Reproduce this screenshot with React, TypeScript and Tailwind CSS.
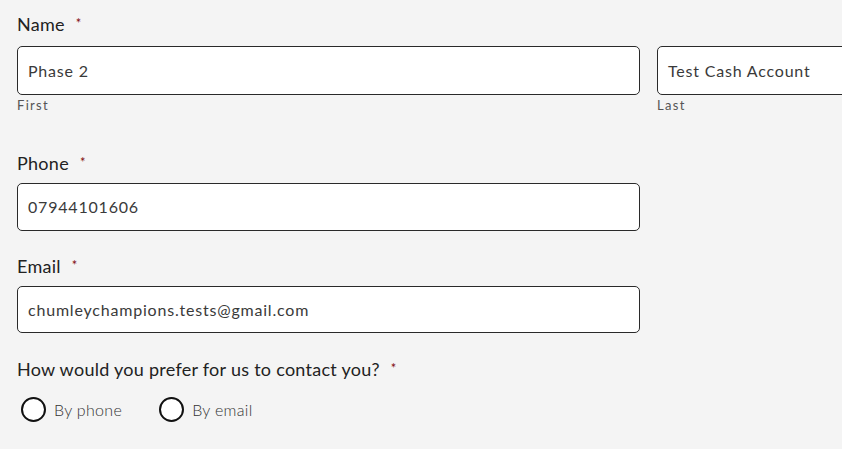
import React from 'react';

const Label: React.FC<{ text: string; className?: string }> = ({ text, className = '' }) => (
  <div className={`flex items-start text-[18px] leading-[24px] tracking-[0.015em] text-[#222] ${className}`}>
    <span>{text}</span>
    <span className="ml-[11px] mt-[3px] text-[13px] leading-[16px] text-[#7d0d0d]">*</span>
  </div>
);

const Field: React.FC<{ value: string; h?: string }> = ({ value, h = 'h-[49px]' }) => (
  <div className={`${h} w-[623px] shrink-0 rounded-[5px] border border-[#2a2a2a] bg-white px-[10px] flex items-center text-[16px] tracking-[0.05em] text-[#3a3a3a]`}>
    {value}
  </div>
);

const Radio: React.FC<{ label: string }> = ({ label }) => (
  <label className="flex items-center gap-[8px]">
    <span className="w-[25px] h-[25px] rounded-full border-2 border-[#111] bg-white" />
    <span className="text-[16px] font-light tracking-[0.02em] text-[#333]">{label}</span>
  </label>
);

export default function App() {
  return (
    <div className="min-h-screen overflow-hidden bg-[#f4f4f4] pl-[17px] pt-[12px]" style={{ fontFamily: 'Lato, "Open Sans", sans-serif' }}>
      {/* Name */}
      <Label text="Name" />
      <div className="mt-[10px] flex gap-[17px]">
        <div className="shrink-0">
          <Field value="Phase 2" />
          <p className="mt-[2px] text-[13px] leading-[16px] tracking-[0.1em] text-[#555]">First</p>
        </div>
        <div className="shrink-0">
          <Field value="Test Cash Account" />
          <p className="mt-[2px] text-[13px] leading-[16px] tracking-[0.1em] text-[#555]">Last</p>
        </div>
      </div>

      {/* Phone */}
      <Label text="Phone" className="mt-[38px]" />
      <div className="mt-[8px]">
        <Field value="07944101606" h="h-[48px]" />
      </div>

      {/* Email */}
      <Label text="Email" className="mt-[23px]" />
      <div className="mt-[8px]">
        <Field value="chumleychampions.tests@gmail.com" h="h-[47px]" />
      </div>

      {/* Contact preference */}
      <Label text="How would you prefer for us to contact you?" className="mt-[24px]" />
      <div className="mt-[16px] flex items-center gap-[37px] pl-[4px]">
        <Radio label="By phone" />
        <Radio label="By email" />
      </div>
    </div>
  );
}
